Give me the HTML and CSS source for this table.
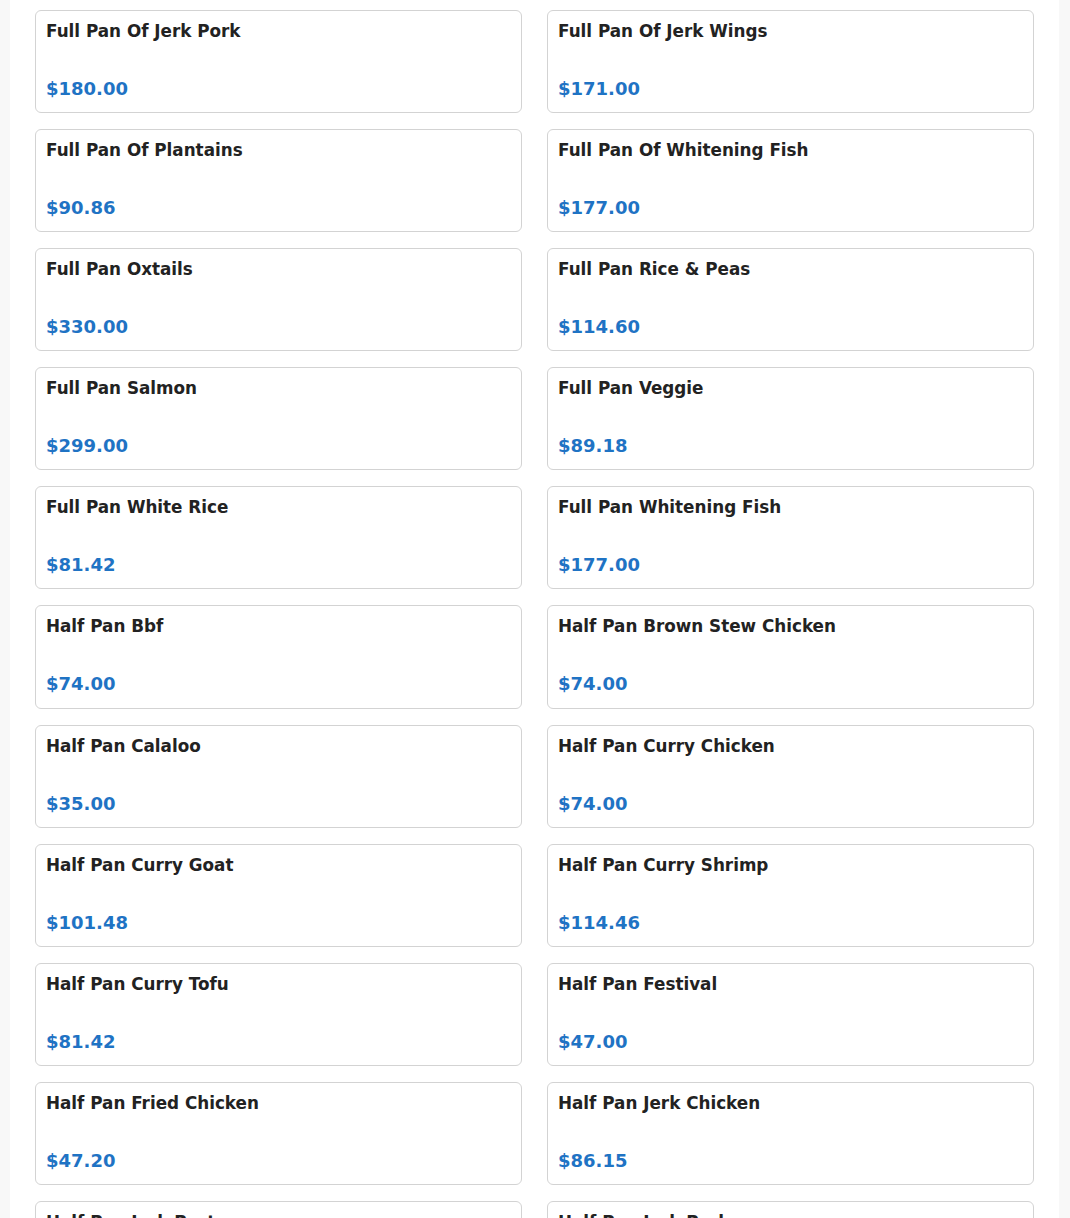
FILE: index.html
```html
<!DOCTYPE html>
<html lang="en">
<head>
<meta charset="utf-8">
<title>Menu</title>
<link rel="stylesheet" href="styles.css">
</head>
<body>
<main class="page">
  <div class="grid">
    <div class="card"><h3 class="name">Full Pan Of Jerk Pork</h3><p class="price">$180.00</p></div>
    <div class="card"><h3 class="name">Full Pan Of Jerk Wings</h3><p class="price">$171.00</p></div>
    <div class="card"><h3 class="name">Full Pan Of Plantains</h3><p class="price">$90.86</p></div>
    <div class="card"><h3 class="name">Full Pan Of Whitening Fish</h3><p class="price">$177.00</p></div>
    <div class="card"><h3 class="name">Full Pan Oxtails</h3><p class="price">$330.00</p></div>
    <div class="card"><h3 class="name">Full Pan Rice &amp; Peas</h3><p class="price">$114.60</p></div>
    <div class="card"><h3 class="name">Full Pan Salmon</h3><p class="price">$299.00</p></div>
    <div class="card"><h3 class="name">Full Pan Veggie</h3><p class="price">$89.18</p></div>
    <div class="card"><h3 class="name">Full Pan White Rice</h3><p class="price">$81.42</p></div>
    <div class="card"><h3 class="name">Full Pan Whitening Fish</h3><p class="price">$177.00</p></div>
    <div class="card"><h3 class="name">Half Pan Bbf</h3><p class="price">$74.00</p></div>
    <div class="card"><h3 class="name">Half Pan Brown Stew Chicken</h3><p class="price">$74.00</p></div>
    <div class="card"><h3 class="name">Half Pan Calaloo</h3><p class="price">$35.00</p></div>
    <div class="card"><h3 class="name">Half Pan Curry Chicken</h3><p class="price">$74.00</p></div>
    <div class="card"><h3 class="name">Half Pan Curry Goat</h3><p class="price">$101.48</p></div>
    <div class="card"><h3 class="name">Half Pan Curry Shrimp</h3><p class="price">$114.46</p></div>
    <div class="card"><h3 class="name">Half Pan Curry Tofu</h3><p class="price">$81.42</p></div>
    <div class="card"><h3 class="name">Half Pan Festival</h3><p class="price">$47.00</p></div>
    <div class="card"><h3 class="name">Half Pan Fried Chicken</h3><p class="price">$47.20</p></div>
    <div class="card"><h3 class="name">Half Pan Jerk Chicken</h3><p class="price">$86.15</p></div>
    <div class="card"><h3 class="name">Half Pan Jerk Pasta</h3><p class="price">$74.00</p></div>
    <div class="card"><h3 class="name">Half Pan Jerk Pork</h3><p class="price">$90.00</p></div>
  </div>
</main>
</body>
</html>
```
FILE: styles.css
```css
html, body {
  margin: 0;
  padding: 0;
}
body {
  background: #f8f8f8;
  font-family: "DejaVu Sans", "Liberation Sans", sans-serif;
}
.page {
  margin: 0 11px 0 10px;
  background: #ffffff;
  padding: 10px 25px 40px;
  min-height: 1300px;
}
.grid {
  display: grid;
  grid-template-columns: 1fr 1fr;
  column-gap: 25px;
  row-gap: 16px;
}
.card {
  border: 1px solid #d3d3d3;
  border-radius: 6px;
  padding: 10px 10px 13.1px;
  background: #fff;
}
.name {
  margin: 0 0 37px;
  font-size: 16.8px;
  font-weight: bold;
  color: #222222;
  line-height: normal;
}
.price {
  margin: 0;
  font-size: 18px;
  font-weight: bold;
  color: #1f73c4;
  line-height: normal;
}
```
